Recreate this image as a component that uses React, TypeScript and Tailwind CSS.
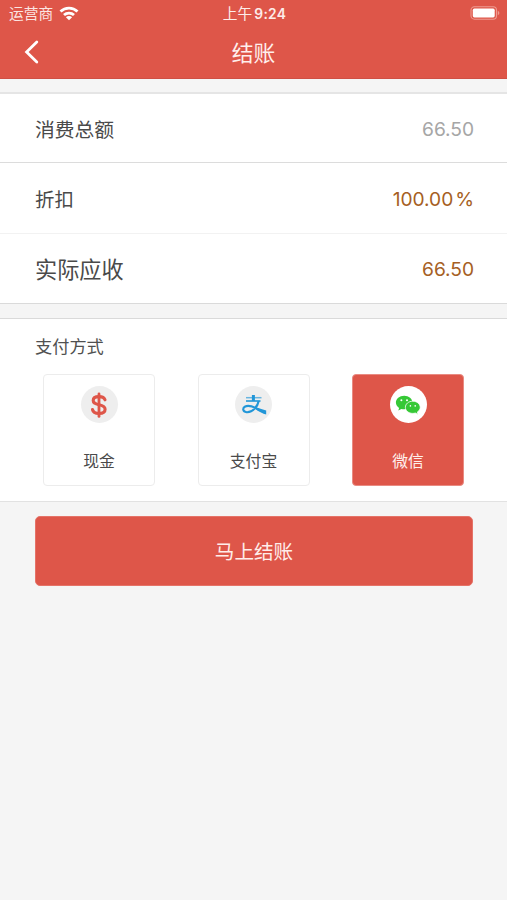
import type { ReactNode } from "react";

function StatusBar() {
  return (
    <div className="grid h-[28px] grid-cols-3 items-center pr-[7px] pl-[9px] text-[14.7px] leading-[28px]">
      <div className="flex h-[28px] items-center gap-[6px] text-[#fbe5e2]">
        <span>运营商</span>
        <svg className="-mt-[2px]" width="20" height="15" viewBox="0 0 20 15" fill="none" stroke="#fff" strokeWidth="2.8">
          <path d="M1.5 5.6a12.2 12.2 0 0 1 17 0" />
          <path d="M5 9.1a7.3 7.3 0 0 1 10 0" />
          <path d="M10 14.3 6.9 11.2a4.4 4.4 0 0 1 6.2 0Z" fill="#fff" stroke="none" />
        </svg>
      </div>
      <div className="text-center whitespace-nowrap text-[#fdece9]">
        上午 <span className="-ml-[2px] text-[13.8px] font-semibold tracking-[0.3px]">9:24</span>
      </div>
      <div className="-mt-[3px] flex justify-end">
        <svg width="30" height="14" viewBox="0 0 30 14">
          <rect x="1" y=".8" width="25.5" height="12.4" rx="3.4" fill="none" stroke="#ee9b91" strokeWidth="1.1" />
          <rect x="2.8" y="2.6" width="21.9" height="8.8" rx="1.6" fill="#fff" />
          <path d="M27.8 4.8v4.4q1.6-.7 1.6-2.2t-1.6-2.2Z" fill="#ee9b91" />
        </svg>
      </div>
    </div>
  );
}

function Header() {
  return (
    <header className="h-[79px] border-b border-[#cf5045] bg-[#de5649] text-white">
      <StatusBar />
      <div className="grid h-[48px] grid-cols-3 items-center pl-[24px]">
        <svg className="-mt-[1px]" width="15" height="24" viewBox="0 0 15 24" fill="none" stroke="#fff" strokeWidth="2.8">
          <path d="M12.8 2 2.6 12l10.2 10" strokeLinecap="round" />
        </svg>
        <h1 className="-ml-[24px] pt-[1px] text-center text-[21.8px] leading-[48px] text-[#ffefec]">结账</h1>
      </div>
    </header>
  );
}

function Row({ label, value, labelStyle, valueStyle, rowStyle }: { label: string; value: ReactNode; labelStyle: string; valueStyle: string; rowStyle: string }) {
  return (
    <div className={`flex items-center justify-between pr-[33px] pl-[35px] ${rowStyle}`}>
      <span className={`text-[#4a4a4a] ${labelStyle}`}>{label}</span>
      <span className={`pb-[2px] text-[19.2px] tracking-[-0.05px] ${valueStyle}`}>{value}</span>
    </div>
  );
}

function Method({ label, active, children }: { label: string; active?: boolean; children: ReactNode }) {
  return (
    <div
      className={`flex h-[112px] w-[112px] flex-col items-center rounded-[4px] border pt-[11px] ${
        active ? "border-[#e98b82] bg-[#de5649] text-[#fff0ed]" : "border-[#ececec] bg-white text-[#4a4a4a]"
      }`}
    >
      <div className={`flex h-[37px] w-[37px] items-center justify-center rounded-full ${active ? "bg-white" : "bg-[#eeeeee]"}`}>{children}</div>
      <span className="mt-[27px] text-[15.8px] leading-[24px]">{label}</span>
    </div>
  );
}

export default function App() {
  return (
    <div className="flex h-[900px] w-[507px] flex-col bg-[#f5f5f5] font-['Inter','Noto_Sans_CJK_SC',sans-serif]">
      <Header />
      <section className="mt-[13px] border-t-2 border-b border-t-[#e5e5e5] border-b-[#dadada] bg-white">
        <Row label="消费总额" value="66.50" rowStyle="h-[69px] pt-[5px] border-b border-[#dcdcdc]" labelStyle="text-[19.8px]" valueStyle="text-[#a6a6a6]" />
        <Row
          label="折扣"
          value={
            <>
              100.00<span className="ml-[2px] text-[19.2px]">%</span>
            </>
          }
          rowStyle="h-[71px] pt-[5px] border-b border-[#f2f2f2]"
          labelStyle="text-[19.4px]"
          valueStyle="text-[#a65f24]"
        />
        <Row label="实际应收" value="66.50" rowStyle="h-[69px] pt-[3px]" labelStyle="text-[22.2px]" valueStyle="text-[#a65f24]" />
      </section>

      <section className="mt-[14px] h-[184px] border-t border-b border-t-[#dadada] border-b-[#e2e2e2] bg-white">
        <h2 className="pt-[13px] pl-[35px] text-[17.2px] leading-[29px] text-[#505050]">支付方式</h2>
        <div className="mt-[13px] flex justify-between pr-[43px] pl-[43px]">
          <Method label="现金">
            <svg width="18" height="26" viewBox="0 0 18 26" fill="none" stroke="#de5649" strokeWidth="3.1" strokeLinecap="round" strokeLinejoin="round">
              <path d="M15 7.800C14.300 5.600 12.200 4.600 9 4.600 5.500 4.600 3.200 6 3.200 8.500c0 2.800 2.600 3.600 5.800 4.200 3.500.7 6.100 1.700 6.100 4.500 0 2.600-2.500 4.200-6.100 4.200-3.700 0-6-1.400-6.500-3.800" />
              <path d="M9 2v22.400" strokeWidth="2.800" />
            </svg>
          </Method>
          <Method label="支付宝">
            <svg className="mt-[1px] ml-[1px]" width="26" height="22" viewBox="0 0 26 22" fill="none" stroke="#2196d8">
              <path d="M5 3.700h15.500" strokeWidth="1.500" strokeOpacity=".65" />
              <path d="M5 7h14.500" strokeWidth="1.600" />
              <path d="M12.400 1v6" strokeWidth="3" />
              <path d="M17.700 7C16.800 12 12 18.600 5.600 18.200 1.700 17.700 1.100 14.200 4.200 12.500c3.600-1.700 8 .2 11.800 2.200 3 1.500 5.500 3 8.500 4" strokeWidth="2.100" />
              <path d="m15.500 13.500 9.700 3.100v3.900c-3.500-.7-6.900-2.800-9.900-4.700Z" fill="#2196d8" stroke="none" />
            </svg>
          </Method>
          <Method label="微信" active>
            <svg width="26" height="20" viewBox="0 0 26 20" fill="#36c836">
              <path d="M9.200.8C4.500.8.9 3.800.9 7.600c0 2.200 1.200 4.100 3.200 5.300l-.8 2.600 3.100-1.600c.9.2 1.800.3 2.800.3 4.600 0 8.300-2.900 8.300-6.600S13.800.8 9.200.8Z" />
              <path
                d="M17.800 6.200c-4.200 0-7.400 2.700-7.400 6.100s3.200 6.100 7.400 6.100c.9 0 1.700-.1 2.500-.4l2.700 1.400-.7-2.300c1.800-1.100 2.900-2.800 2.900-4.800 0-3.400-3.300-6.100-7.400-6.100Z"
                stroke="#fff"
                strokeWidth=".8"
              />
              <g fill="#fff">
                <circle cx="6.400" cy="5.300" r="1" />
                <circle cx="12" cy="5.300" r="1" />
                <circle cx="15.400" cy="10.900" r=".8" />
                <circle cx="20.200" cy="10.900" r=".8" />
              </g>
            </svg>
          </Method>
        </div>
      </section>

      <button className="mr-[34px] ml-[35px] mt-[14px] h-[70px] rounded-[5px] border border-[#e57368] bg-[#de5649] pt-[4px] text-[19.6px] text-[#ffedea]">马上结账</button>
    </div>
  );
}
